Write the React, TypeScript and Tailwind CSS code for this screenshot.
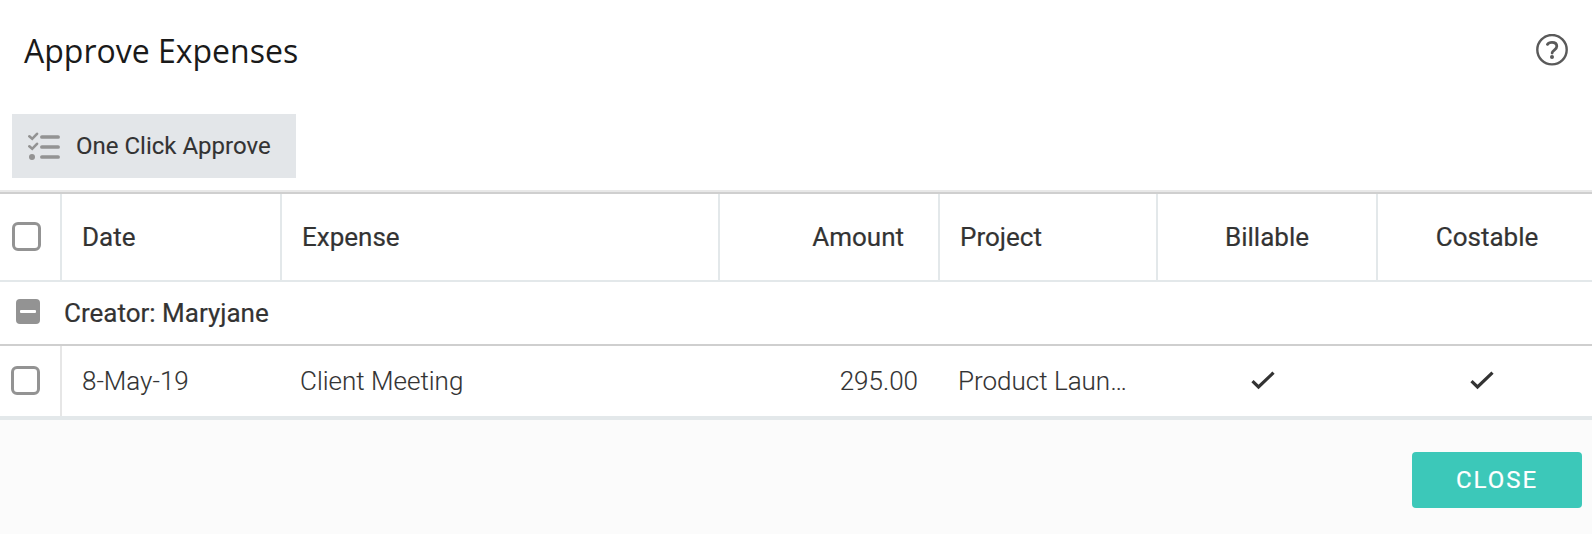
import clsx from "clsx";

interface Expense {
  date: string;
  expense: string;
  amount: string;
  project: string;
  billable: boolean;
  costable: boolean;
}

const expenses: Expense[] = [
  {
    date: "8-May-19",
    expense: "Client Meeting",
    amount: "295.00",
    project: "Product Laun…",
    billable: true,
    costable: true,
  },
];

const columns = [
  { label: "Date", className: "w-[220px] pl-5" },
  { label: "Expense", className: "w-[438px] pl-5" },
  { label: "Amount", className: "w-[220px] justify-end pr-[34px]" },
  { label: "Project", className: "w-[218px] pl-5" },
  { label: "Billable", className: "w-[220px] justify-center" },
  { label: "Costable", className: "w-[220px] justify-center" },
];

function HelpIcon() {
  return (
    <svg width="32" height="32" viewBox="0 0 32 32" fill="none" stroke="#5a5a5a">
      <circle cx="16" cy="15.7" r="14.7" strokeWidth="2.4" />
      <path
        d="M11.4 10.4C12.2 9.1 13.8 8.3 16 8.3c2.9 0 4.8 1.5 4.8 3.9 0 1.8-1 2.8-2.5 3.9-1.500 1.100-2.200 1.900-2.200 3"
        strokeWidth="2.8"
        strokeLinecap="round"
      />
      <circle cx="16" cy="23" r="2" fill="#5a5a5a" stroke="none" />
    </svg>
  );
}

function ChecklistIcon() {
  return (
    <svg width="32" height="28" viewBox="0 0 32 28" fill="none" stroke="#939393">
      <path d="M1.3 4.3l2.9 2.500 4.800-5M1.300 14.300l2.900 2.500 4.800-5" strokeWidth="2.6" strokeLinecap="round" />
      <circle cx="4" cy="25" r="3" fill="#939393" stroke="none" />
      <path d="M13.9 5h16.2M13.9 15h16.2M13.9 25h16.2" strokeWidth="3.7" strokeLinecap="round" />
    </svg>
  );
}

function CheckIcon() {
  return (
    <svg width="24" height="20" viewBox="0 0 24 20" fill="none" stroke="#333333">
      <path d="M1.5 10.2L7.500 16 22.500 1.700" strokeWidth="3.2" />
    </svg>
  );
}

function Checkbox() {
  return (
    <span className="mb-px block size-[29px] shrink-0 rounded-[6px] border-3 border-[#939393]" />
  );
}

export default function App() {
  return (
    <div className="flex h-[534px] w-[1592px] flex-col overflow-hidden bg-white font-['Roboto',sans-serif] text-[26px] text-[#333333]">
      <header className="flex h-[114px] items-start justify-between pl-6 pr-6">
        <h1 className="pt-[29px] font-['Open_Sans',sans-serif] text-[32px] leading-[44px] text-[#1a1a1a]">
          Approve Expenses
        </h1>
        <button className="mt-[34px]">
          <HelpIcon />
        </button>
      </header>

      <div className="flex h-[76px] items-start pl-3">
        <button className="flex h-16 w-[284px] items-center bg-[#e3e6e9] pl-4 text-2xl [-webkit-text-stroke:0.1px]">
          <ChecklistIcon />
          <span className="pl-4">One Click Approve</span>
        </button>
      </div>

      <div className="h-0.5 bg-[#e8e8e8]" />
      <div className="h-0.5 bg-[#cfcfcf]" />

      <div className="flex h-[88px] border-b-2 border-[#e3e8ea]">
        <div className="flex w-[60px] shrink-0 items-center pl-3">
          <Checkbox />
        </div>
        {columns.map((column) => (
          <div
            key={column.label}
            className={clsx(
              "flex shrink-0 items-center border-l-2 border-[#e3e8ea] [-webkit-text-stroke:0.2px]",
              column.className
            )}
          >
            {column.label}
          </div>
        ))}
      </div>

      <div className="flex h-16 items-center border-b-2 border-[#cfcfcf] pl-4">
        <span className="mb-[3px] flex h-[25px] w-6 items-center justify-center rounded-[4px] bg-[#939393]">
          <span className="h-[3px] w-4 rounded-[1px] bg-white" />
        </span>
        <span className="pl-6 [-webkit-text-stroke:0.2px]">Creator: Maryjane</span>
      </div>

      {expenses.map((item) => (
        <div key={item.date} className="flex h-[70px] items-center font-light [-webkit-text-stroke:0.1px]">
          <div className="flex h-full w-[62px] shrink-0 items-center border-r-2 border-[#e6e6e6] pl-[11px]">
            <Checkbox />
          </div>
          <div className="w-[218px] shrink-0 pl-5">{item.date}</div>
          <div className="w-[438px] shrink-0 pl-5">{item.expense}</div>
          <div className="w-[220px] shrink-0 pr-5 text-right">{item.amount}</div>
          <div className="w-[218px] shrink-0 pl-5">{item.project}</div>
          <div className="flex w-[213px] shrink-0 justify-center">
            {item.billable && <CheckIcon />}
          </div>
          <div className="flex w-[225px] shrink-0 justify-center">
            {item.costable && <CheckIcon />}
          </div>
        </div>
      ))}

      <footer className="flex flex-1 items-start justify-end border-t-4 border-[#e3e8ea] bg-[#fbfbfb] pr-2.5 pt-8">
        <button className="h-14 w-[170px] rounded bg-[#3cc8b9] text-2xl tracking-[2px] text-white [-webkit-text-stroke:0.2px]">
          CLOSE
        </button>
      </footer>
    </div>
  );
}
